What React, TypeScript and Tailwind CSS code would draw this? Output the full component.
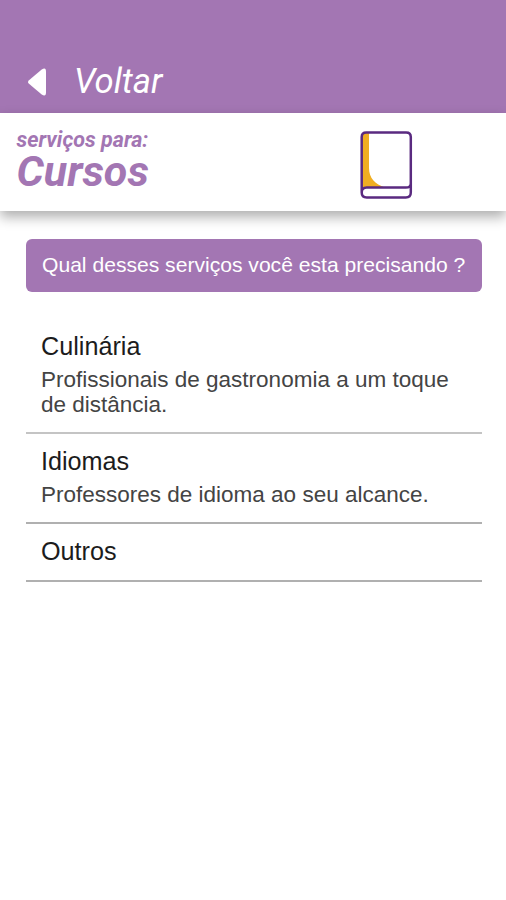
type Servico = {
  nome: string;
  descricao?: string;
  border: string;
};

const servicos: Servico[] = [
  {
    nome: "Culinária",
    descricao: "Profissionais de gastronomia a um toque de distância.",
    border: "h-[115px] border-b-2 border-[#c4c4c4]",
  },
  {
    nome: "Idiomas",
    descricao: "Professores de idioma ao seu alcance.",
    border: "h-[90px] border-b-2 border-[#b0b0b0]",
  },
  { nome: "Outros", border: "h-[58px] border-b-2 border-[#b0b0b0]" },
];

function BookIcon() {
  return (
    <svg width="54" height="70" viewBox="0 0 54 70" fill="none">
      <path d="M3 3H10V38C10 48 16 54 26 57.5H3Z" fill="#f0ae22" />
      <path
        d="M2.7 62.6V7Q2.7 2.4 7.3 2.4H47.2Q51.8 2.4 51.8 7V62.6Q51.8 67.6 46.8 67.6H7.7Q2.7 67.6 2.7 62.6Q2.7 57.6 7.7 57.6H46.8Q51.8 57.6 51.8 53.5"
        stroke="#5a2a80"
        strokeWidth="2.5"
      />
    </svg>
  );
}

export default function App() {
  return (
    <div className="min-h-[900px] w-full bg-white font-['Liberation_Sans',Arial,sans-serif]">
      <header className="flex h-[113px] items-end bg-[#a376b3] pb-[12px] pl-[28px] text-white">
        <svg
          width="18"
          height="28"
          viewBox="0 0 18 28"
          className="mb-[5px]"
          fill="currentColor"
        >
          <path d="M1 12.2L13.7 1.5Q18 -1.3 18 3.5V24.5Q18 29.3 13.7 26.5L1 15.8Q-1 14 1 12.2Z" />
        </svg>
        <span className="ml-[28px] font-[Roboto,sans-serif] text-[34.6px] leading-[40px] italic">
          Voltar
        </span>
      </header>

      <section className="flex h-[98px] justify-between bg-white pr-[93px] pl-[16.5px] font-[Roboto,sans-serif] font-bold text-[#a376b3] italic shadow-[0_6px_12px_0_rgba(0,0,0,0.32)]">
        <div className="pt-[15px]">
          <p className="text-[21.5px] leading-[24px]">serviços para:</p>
          <h1 className="text-[43px] leading-[38px]">Cursos</h1>
        </div>
        <div className="pt-[17px]">
          <BookIcon />
        </div>
      </section>

      <main className="pr-[24.5px] pl-[25.5px] pt-[28px]">
        <div className="flex h-[53px] items-center rounded-[6px] bg-[#a376b3] pb-[2px] pl-[16.5px] text-[21.1px] whitespace-nowrap text-white">
          Qual desses serviços você esta precisando ?
        </div>
        <ul className="mt-[27px]">
          {servicos.map((s) => (
            <li key={s.nome} className={`pr-4 pl-[15.5px] pt-[13px] ${s.border}`}>
              <h2 className="text-[25.2px] leading-[28px] text-[#1c1c1c]">
                {s.nome}
              </h2>
              {s.descricao && (
                <p className="mt-[7px] text-[22.5px] leading-[25px] text-[#444444]">
                  {s.descricao}
                </p>
              )}
            </li>
          ))}
        </ul>
      </main>
    </div>
  );
}
